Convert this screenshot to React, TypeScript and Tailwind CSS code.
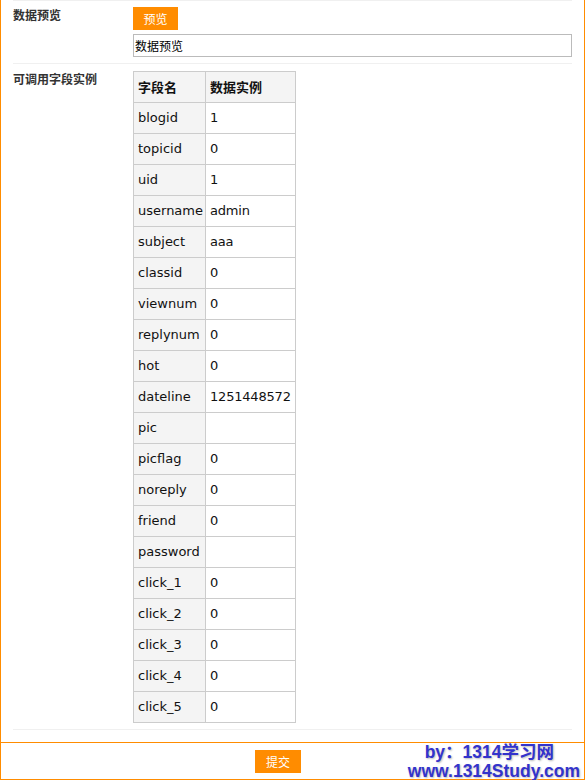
const fields: [string, string][] = [
  ['blogid', '1'],
  ['topicid', '0'],
  ['uid', '1'],
  ['username', 'admin'],
  ['subject', 'aaa'],
  ['classid', '0'],
  ['viewnum', '0'],
  ['replynum', '0'],
  ['hot', '0'],
  ['dateline', '1251448572'],
  ['pic', ''],
  ['picflag', '0'],
  ['noreply', '0'],
  ['friend', '0'],
  ['password', ''],
  ['click_1', '0'],
  ['click_2', '0'],
  ['click_3', '0'],
  ['click_4', '0'],
  ['click_5', '0'],
];

const cjk = "font-['Noto_Sans_CJK_SC',sans-serif]";

export default function App() {
  return (
    <div className="relative h-[780px] w-[585px] bg-white border-x border-[#ff8c00] overflow-hidden">
      <div className="px-3">
        {/* preview row */}
        <div className="flex border-t border-b border-[#f0f0f0] h-[64px]">
          <div className={`w-[120px] pt-[6px] text-[12px] leading-[16px] font-bold text-[#333] ${cjk}`}>
            数据预览
          </div>
          <div className="flex-1 pt-[6px] flex flex-col gap-[4px]">
            <button
              className={`w-[45px] h-[23px] bg-[#ff8c00] text-white text-[12px] leading-[23px] ${cjk}`}
            >
              预览
            </button>
            <div
              className={`h-[23px] border border-[#bbb] px-[1px] text-[12px] leading-[21px] text-black ${cjk}`}
            >
              数据预览
            </div>
          </div>
        </div>

        {/* fields row */}
        <div className="flex border-b border-[#f0f0f0] h-[666px]">
          <div className={`w-[120px] pt-[7px] text-[12px] leading-[16px] font-bold text-[#333] ${cjk}`}>
            可调用字段实例
          </div>
          <div className="flex-1 pt-[7px]">
            <table className="table-fixed w-[162px] border-collapse text-[13px] text-[#111] font-['DejaVu_Sans',sans-serif]">
              <thead>
                <tr className="h-[31px] bg-[#f4f4f4]">
                  <th className={`w-[72px] border border-[#ccc] px-[4px] text-left font-bold ${cjk}`}>字段名</th>
                  <th className={`w-[90px] border border-[#ccc] px-[4px] text-left font-bold ${cjk}`}>数据实例</th>
                </tr>
              </thead>
              <tbody>
                {fields.map(([k, v]) => (
                  <tr key={k} className="h-[31px]">
                    <td className="border border-[#ccc] bg-[#f4f4f4] px-[4px] whitespace-nowrap">{k}</td>
                    <td className="border border-[#ccc] px-[4px] whitespace-nowrap tracking-[-0.2px]">{v}</td>
                  </tr>
                ))}
              </tbody>
            </table>
          </div>
        </div>
      </div>

      {/* submit bar */}
      <div className="mt-[12px] h-[38px] border-y border-[#ff8c00] flex items-center pl-[254px]">
        <button className={`w-[46px] h-[23px] bg-[#ff8c00] text-white text-[12px] leading-[23px] ${cjk}`}>
          提交
        </button>
      </div>

      {/* watermark */}
      <div className="absolute right-[4px] bottom-0 flex flex-col items-end font-['Liberation_Sans','Noto_Sans_CJK_SC',sans-serif] font-bold text-[#3333cc] [text-shadow:1px_1px_2px_#bbb]">
        <div className="text-[17.5px] leading-[20px] pr-[26px]">by：1314学习网</div>
        <div className="text-[17.5px] leading-[18px]">www.1314Study.com</div>
      </div>
    </div>
  );
}
